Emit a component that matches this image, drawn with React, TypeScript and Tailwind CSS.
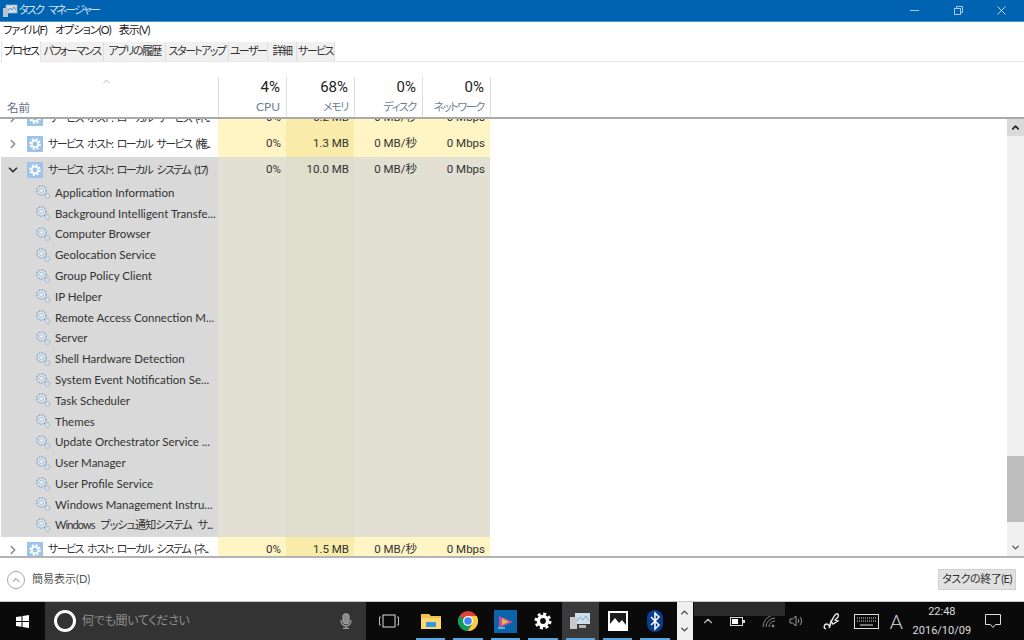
import type { ReactNode } from 'react';
import { ChevronDown, ChevronRight, ChevronUp } from 'lucide-react';

const font = "font-['Lato','Noto_Sans_CJK_JP',sans-serif] [font-feature-settings:'palt']";

const TABS = [
  { label: 'プロセス', width: 'w-[40px]' },
  { label: 'パフォーマンス', width: 'w-[63px]' },
  { label: 'アプリの履歴', width: 'w-[62px]' },
  { label: 'スタートアップ', width: 'w-[63px]' },
  { label: 'ユーザー', width: 'w-[39px]' },
  { label: '詳細', width: 'w-[29px]' },
  { label: 'サービス', width: 'w-[38px]' },
];

const SERVICES = [
  'Application Information',
  'Background Intelligent Transfe...',
  'Computer Browser',
  'Geolocation Service',
  'Group Policy Client',
  'IP Helper',
  'Remote Access Connection M...',
  'Server',
  'Shell Hardware Detection',
  'System Event Notification Se...',
  'Task Scheduler',
  'Themes',
  'Update Orchestrator Service ...',
  'User Manager',
  'User Profile Service',
  'Windows Management Instru...',
  'Windows プッシュ通知システム サ...',
];

const HostIcon = () => (
  <svg width="16" height="16" viewBox="0 0 16 16" className="shrink-0">
    <rect width="16" height="16" fill="#9cc4ea" />
    <circle cx="8" cy="8" r="4.6" fill="none" stroke="#fff" strokeWidth="2.4" strokeDasharray="2 1.6" />
    <circle cx="8" cy="8" r="3.2" fill="none" stroke="#fff" strokeWidth="1.6" />
  </svg>
);

const ServiceIcon = () => (
  <svg width="16" height="16" viewBox="0 0 16 16" className="shrink-0">
    <circle cx="6.5" cy="6.5" r="4.6" fill="#dbe6ef" stroke="#8fa9bf" strokeWidth="1.4" strokeDasharray="2 1" />
    <circle cx="6.5" cy="6.5" r="2" fill="#f2f5f8" stroke="#9db4c7" strokeWidth="0.8" />
    <circle cx="12.5" cy="12" r="2.4" fill="#d4e0ea" stroke="#8fa9bf" strokeWidth="1" strokeDasharray="1.2 .6" />
  </svg>
);

const Cell = ({ children, bg }: { children?: string; bg: string }) => (
  <div className={`${bg} flex w-[68px] shrink-0 items-center justify-end pr-[5px] font-['Roboto','Noto_Sans_CJK_JP',sans-serif] text-[11.5px] text-[#333]`}>
    {children}
  </div>
);

const ProcessRow = ({ name, values, open, className }: { name: string; values: string[]; open?: boolean; className?: string }) => {
  const yellow = ['bg-[#fff4c4]', 'bg-[#f9ecaa]', 'bg-[#fff4c4]', 'bg-[#fff4c4]'];
  const grey = ['bg-[#e1e0d3]', 'bg-[#dfddcc]', 'bg-[#e1e0d3]', 'bg-[#e1e0d3]'];
  const bgs = open ? grey : yellow;
  return (
    <div className={`flex h-[26px] shrink-0 pl-px ${className ?? ''}`}>
      <div className={`flex w-[217px] shrink-0 items-center overflow-hidden ${open ? 'bg-[#d9d9d9]' : ''}`}>
        <div className="flex w-[26px] shrink-0 justify-center pr-[3px]">
          {open ? <ChevronDown size={14} strokeWidth={3} className="text-[#333]" /> : <ChevronRight size={14} strokeWidth={2.5} className="text-[#888]" />}
        </div>
        <HostIcon />
        <span className="ml-[5px] whitespace-nowrap text-[11px] tracking-[-1.6px] text-[#333] [word-spacing:3px]">{name}</span>
      </div>
      {values.map((v, i) => (
        <Cell key={i} bg={bgs[i]}>{v}</Cell>
      ))}
    </div>
  );
};

const HeaderCol = ({ pct, label, jp }: { pct: string; label: string; jp?: boolean }) => (
  <div className="flex w-[68px] shrink-0 flex-col items-end border-l border-l-[#dcdcdc] pr-[6px]">
    <div className="font-['Roboto'] text-[15px] leading-[20px] text-[#222]">{pct}</div>
    <div className={`mt-[2px] whitespace-nowrap leading-[16px] text-[#6a7f94] ${jp ? 'text-[11px] tracking-[-1.3px]' : 'text-[12px]'}`}>{label}</div>
  </div>
);

function TaskIcon({ children, active }: { children: ReactNode; active?: boolean }) {
  return (
    <div className={`relative flex w-[37.4px] shrink-0 items-center justify-center ${active ? 'bg-[#3a3a3a]' : ''}`}>
      {children}
      <div className="absolute bottom-0 left-[4px] right-[4px] h-[2px] bg-[#5aa6e0]" />
    </div>
  );
}

export default function App() {
  return (
    <div className={`flex h-[640px] w-[1024px] flex-col overflow-hidden bg-white ${font}`}>
      {/* title bar */}
      <div className="flex h-[22px] shrink-0 items-center border-b border-b-[#4a93cc] bg-[#0063b1]">
        <svg width="16" height="14" viewBox="0 0 16 14" className="ml-[2px]">
          <rect x="4" y="1" width="11" height="8" fill="#d5dfe8" stroke="#9fb0bf" strokeWidth="0.8" />
          <path d="M6 7l2-3 2 2 2-3 2 3" stroke="#5c92c2" fill="none" />
          <rect x="1" y="4" width="5" height="9" fill="#b9c4ce" />
        </svg>
        <span className="ml-[1px] text-[11px] tracking-[-1.7px] text-[#d4e4f2] [word-spacing:4px]">タスク マネージャー</span>
        <div className="ml-auto flex items-center">
          <div className="h-px w-[9px] bg-[#a9cbe6]" />
          <svg width="9" height="9" viewBox="0 0 9 9" className="ml-[35px]" fill="none" stroke="#a9cbe6">
            <rect x="0.5" y="2.5" width="6" height="6" />
            <path d="M2.5 2.5v-2h6v6h-2" />
          </svg>
          <svg width="9" height="9" viewBox="0 0 9 9" className="ml-[34px] mr-[18px]" stroke="#c6dcee" fill="none">
            <path d="M.5.5l8 8M8.500.5l-8 8" />
          </svg>
        </div>
      </div>

      {/* menu */}
      <div className="flex h-[17px] shrink-0 items-center gap-[8px] pl-[3px] text-[11px] tracking-[-0.9px] text-[#222]">
        <span>ファイル(F)</span>
        <span>オプション(O)</span>
        <span>表示(V)</span>
      </div>

      {/* tabs */}
      <div className="flex h-[23px] shrink-0 items-end border-b border-b-[#e8e8e8] pl-px">
        {TABS.map((t, i) => (
          <div
            key={t.label}
            className={`${t.width} flex shrink-0 items-center justify-center whitespace-nowrap text-[11px] tracking-[-1.6px] ${i === 0
              ? '-mb-px h-[21px] border-x border-x-[#e4e4e4] bg-white text-[#222]'
              : 'h-[19px] border-r border-r-[#dedede] bg-[#f0f0f0] text-[#333]'}`}
          >
            {t.label}
          </div>
        ))}
      </div>

      {/* column header */}
      <div className="flex h-[57px] shrink-0 items-stretch border-b-2 border-b-[#a9a9a9] bg-white pt-[15px]">
        <div className="relative flex w-[218px] shrink-0 items-end pb-[1px] pl-[7px] text-[11.5px] text-[#5f6f7f]">
          <ChevronUp size={11} className="absolute left-[101px] top-[-1px] text-[#aaa]" />
          名前
        </div>
        <HeaderCol pct="4%" label="CPU" />
        <HeaderCol pct="68%" label="メモリ" jp />
        <HeaderCol pct="0%" label="ディスク" jp />
        <HeaderCol pct="0%" label="ネットワーク" jp />
        <div className="border-l border-l-[#dcdcdc]" />
      </div>

      {/* table + scrollbar */}
      <div className="flex h-[439px] shrink-0 border-b-2 border-b-[#b4b4b4]">
        <div className="flex-1 overflow-hidden">
          <ProcessRow name="サービス ホスト: ローカル サービス (ネ..." values={['0%', '6.2 MB', '0 MB/秒', '0 Mbps']} className="-mt-[14px]" />
          <ProcessRow name="サービス ホスト: ローカル サービス (権..." values={['0%', '1.3 MB', '0 MB/秒', '0 Mbps']} />
          <ProcessRow name="サービス ホスト: ローカル システム (17)" values={['0%', '10.0 MB', '0 MB/秒', '0 Mbps']} open />
          {SERVICES.map(s => (
            <div key={s} className="flex h-[20.8px] pl-px">
              <div className="flex w-[217px] shrink-0 items-center overflow-hidden bg-[#d9d9d9] pb-[2px] pl-[34px]">
                <ServiceIcon />
                <span className={`ml-[4px] whitespace-nowrap text-[#333] ${s.startsWith('Windows プ') ? 'text-[11px] tracking-[-0.9px] [word-spacing:4px]' : 'text-[11.5px]'}`}>{s}</span>
              </div>
              <div className="w-[68px] shrink-0 bg-[#e1e0d3]" />
              <div className="w-[68px] shrink-0 bg-[#dfddcc]" />
              <div className="w-[68px] shrink-0 bg-[#e1e0d3]" />
              <div className="w-[68px] shrink-0 bg-[#e1e0d3]" />
            </div>
          ))}
          <ProcessRow name="サービス ホスト: ローカル システム (ネ..." values={['0%', '1.5 MB', '0 MB/秒', '0 Mbps']} />
        </div>
        <div className="flex w-[17px] shrink-0 flex-col bg-[#f0f0f0]">
          <div className="flex h-[17px] items-center justify-center bg-[#dadada]">
            <ChevronUp size={11} strokeWidth={3.5} className="text-[#222]" />
          </div>
          <div className="flex-1" />
          <div className="h-[66px] bg-[#bdbdbd]" />
          <div className="h-[17px]" />
          <div className="flex h-[17px] items-center justify-center">
            <ChevronDown size={11} strokeWidth={3} className="text-[#555]" />
          </div>
        </div>
      </div>

      {/* footer */}
      <div className="flex h-[44px] shrink-0 items-center border-b border-b-[#c8c8c8] pl-[7px] pr-[8px]">
        <div className="flex h-[18px] w-[18px] items-center justify-center rounded-full border border-[#aaa]">
          <ChevronUp size={12} className="text-[#777]" />
        </div>
        <span className="ml-[7px] text-[11px] text-[#555]">簡易表示(D)</span>
        <div className="ml-auto flex h-[21px] w-[78px] items-center justify-center whitespace-nowrap border border-[#d0d0d0] bg-[#e1e1e1] text-[11px] tracking-[-0.5px] text-[#333]">
          タスクの終了(E)
        </div>
      </div>

      {/* taskbar */}
      <div className="flex h-[38px] shrink-0 items-stretch bg-[#0b0a0b]">
        <div className="flex w-[45px] shrink-0 items-center justify-center">
          <svg width="13" height="13" viewBox="0 0 13 13" fill="#fff">
            <path d="M0 2l5.5-.8V6H0zM6.5 1L13 0v6H6.5zM0 7h5.5v4.8L0 11zM6.5 7H13v6l-6.5-1z" />
          </svg>
        </div>
        <div className="flex w-[321px] shrink-0 items-center bg-[#333333] pl-[9px]">
          <div className="h-[22px] w-[22px] rounded-full border-[3px] border-white" />
          <span className="ml-[6px] text-[12px] tracking-[-0.3px] text-[#8f8f8f]">何でも聞いてください</span>
          <svg width="12" height="16" viewBox="0 0 12 16" className="ml-auto mr-[14px]" fill="none" stroke="#a0a0a0" strokeWidth="1.2">
            <rect x="3" y="0.8" width="6" height="10" rx="3" fill="#8a8a8a" />
            <path d="M1 7v1a5 5 0 0010 0V7M6 13v2M3 15.3h6" />
          </svg>
        </div>
        <div className="flex w-[46px] shrink-0 items-center justify-center">
          <svg width="20" height="14" viewBox="0 0 20 14" fill="none" stroke="#bbb">
            <rect x="4" y="1" width="12" height="12" stroke="#ddd" />
            <path d="M2 3H.5v8H2M18 3h1.5v8H18" />
          </svg>
        </div>
        <TaskIcon>
          <svg width="22" height="18" viewBox="0 0 22 18">
            <path d="M1 2h8l2 2h10v3H1z" fill="#f3c24b" />
            <rect x="1" y="6" width="20" height="11" fill="#fbd870" />
            <rect x="6" y="10" width="10" height="5" fill="#3a96dd" />
          </svg>
        </TaskIcon>
        <TaskIcon>
          <svg width="20" height="20" viewBox="0 0 20 20">
            <circle cx="10" cy="10" r="10" fill="#db4437" />
            <path d="M10 10L1.3 15A10 10 0 0 1 1.3 5z" fill="#0f9d58" />
            <path d="M10 20a10 10 0 0 1-8.7-5L6 10l8 2z" fill="#0f9d58" />
            <path d="M10 5h8.7A10 10 0 0 1 10 20l4.3-7z" fill="#ffcd40" />
            <circle cx="10" cy="10" r="5" fill="#fff" />
            <circle cx="10" cy="10" r="3.8" fill="#4285f4" />
          </svg>
        </TaskIcon>
        <TaskIcon>
          <svg width="23" height="23" viewBox="0 0 23 23">
            <rect width="23" height="23" fill="#0b64a8" />
            <path d="M5 6l14 6-14 6z" fill="#c54ea0" />
            <path d="M8 8l7 4-7 3z" fill="#e6b54a" />
            <path d="M4 17h7v2H4z" fill="#53b6d8" />
          </svg>
        </TaskIcon>
        <TaskIcon>
          <svg width="18" height="18" viewBox="0 0 18 18" fill="none">
            <circle cx="9" cy="9" r="4.6" stroke="#fff" strokeWidth="3.4" />
            <circle cx="9" cy="9" r="7.2" stroke="#fff" strokeWidth="2.6" strokeDasharray="3 2.65" />
          </svg>
        </TaskIcon>
        <TaskIcon active>
          <svg width="22" height="20" viewBox="0 0 22 20">
            <rect x="6" y="2" width="15" height="11" fill="#cfdde9" />
            <path d="M8 10l3-4 3 3 3-4 3 5" fill="none" stroke="#7fa9cd" />
            <rect x="1" y="6" width="7" height="12" fill="#c6c9cc" />
            <rect x="10" y="14" width="7" height="3" fill="#b4b8bc" />
          </svg>
        </TaskIcon>
        <TaskIcon>
          <svg width="20" height="20" viewBox="0 0 20 20">
            <rect width="20" height="20" fill="#fff" />
            <rect x="2" y="2" width="16" height="16" fill="#1c1c1c" />
            <path d="M2 18v-5l5-6 4 5 3-3 4 5v4z" fill="#fff" />
          </svg>
        </TaskIcon>
        <TaskIcon>
          <svg width="16" height="22" viewBox="0 0 16 22">
            <rect width="16" height="22" rx="8" fill="#0a3d8f" />
            <path d="M4 7l8 8-4 4V3l4 4-8 8" fill="none" stroke="#fff" strokeWidth="1.5" />
          </svg>
        </TaskIcon>
        <div className="ml-[3px] flex w-[16px] shrink-0 flex-col items-center justify-center gap-[6px] bg-[#f0f0f0]">
          <ChevronUp size={11} strokeWidth={3} className="text-[#444]" />
          <ChevronDown size={11} strokeWidth={3} className="text-[#444]" />
        </div>
        <div className="relative flex flex-1 items-center text-[#bbb]">
          <div className="absolute left-[1px] top-0 h-[14px] w-[91px] bg-[#2b2b2b]" />
          <ChevronUp size={14} className="relative ml-[8px]" />
          <svg width="15" height="9" viewBox="0 0 15 9" className="relative ml-[15px]">
            <rect x="0.5" y="0.5" width="12" height="8" fill="none" stroke="#ddd" />
            <rect x="2" y="2" width="6" height="5" fill="#fff" />
            <rect x="13" y="3" width="2" height="3" fill="#ddd" />
          </svg>
          <svg width="14" height="14" viewBox="0 0 14 14" className="ml-[17px]" fill="none" stroke="#888">
            <path d="M1 13a12 12 0 0112-12M4 13a9 9 0 019-9M7 13a6 6 0 016-6" />
            <circle cx="11" cy="12" r="1" fill="#888" />
          </svg>
          <svg width="15" height="14" viewBox="0 0 15 14" className="ml-[13px]" fill="none" stroke="#999">
            <path d="M1 5h2.500L7 2v10L3.500 9H1zM9 5a3 3 0 010 4M11 3a6 6 0 010 8" />
          </svg>
          <svg width="18" height="20" viewBox="0 0 18 20" className="ml-[19px]" fill="none" stroke="#eee" strokeWidth="1.3">
            <path d="M3 18c-3-1-2-5 1-5l3 2c1-4 3-9 6-12 2-1 3 1 2 3l-3 3 3 1-5 3-2-3-2 7" />
          </svg>
          <svg width="25" height="15" viewBox="0 0 25 15" className="ml-[13px]" fill="none" stroke="#ddd">
            <rect x="0.500" y="0.500" width="24" height="14" />
            <path d="M3 4h19M3 7h19" strokeDasharray="1 1" />
            <path d="M6 11h13" />
          </svg>
          <span className="ml-[11px] text-[20px] font-light text-[#ddd]">A</span>
          <div className="ml-[10px] flex w-[58px] flex-col items-center whitespace-nowrap font-['Roboto'] text-[11px] leading-[19px] text-[#ddd]">
            <span>22:48</span>
            <span>2016/10/09</span>
          </div>
          <svg width="16" height="15" viewBox="0 0 16 15" className="ml-[14px]" fill="none" stroke="#ddd">
            <path d="M.5.5h15v10h-5l-2.500 3-2.500-3h-5z" />
          </svg>
        </div>
      </div>
    </div>
  );
}
